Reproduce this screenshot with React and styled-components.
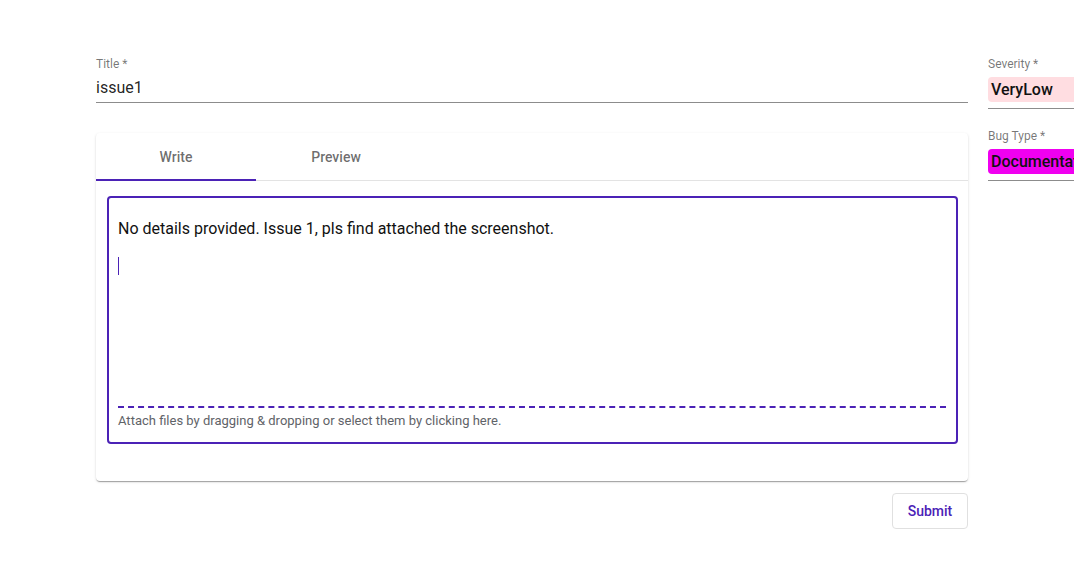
import React from "react";
import styled, { createGlobalStyle } from "styled-components";

const purple = "#4b22b6";

const GlobalStyle = createGlobalStyle`
  html, body {
    margin: 0;
    padding: 0;
    background: #fff;
    overflow: hidden;
  }
  body {
    font-family: Roboto, "Liberation Sans", sans-serif;
    color: rgba(0, 0, 0, 0.87);
  }
`;

const Page = styled.div`
  display: flex;
  gap: 20px;
  padding: 56px 0 0 96px;
  width: 1074px;
  box-sizing: border-box;
`;

const Main = styled.div`
  width: 872px;
  flex-shrink: 0;
`;

const Side = styled.div`
  width: 86px;
  flex-shrink: 0;
  overflow: hidden;
`;

const Label = styled.div`
  font-size: 12px;
  line-height: 16px;
  color: rgba(0, 0, 0, 0.54);
  white-space: nowrap;
`;

const InputRow = styled.div`
  font-size: 16px;
  line-height: 19px;
  padding: 5px 0 5px;
  border-bottom: 1px solid #8c8c8c;
  margin-top: 1px;
`;

const Card = styled.div`
  margin-top: 30px;
  background: #fff;
  border-radius: 4px;
  box-shadow: 0 2px 1px -1px rgba(0, 0, 0, 0.2), 0 1px 1px 0 rgba(0, 0, 0, 0.14),
    0 1px 3px 0 rgba(0, 0, 0, 0.12);
  padding-bottom: 37px;
`;

const TabBar = styled.div`
  display: flex;
  box-shadow: inset 0 -1px 0 #e3e3e3;
`;

const Tab = styled.div`
  width: 160px;
  height: 48px;
  display: flex;
  align-items: center;
  justify-content: center;
  font-size: 14px;
  font-weight: 500;
  color: rgba(0, 0, 0, 0.58);
  box-shadow: ${({ $active }) => ($active ? `inset 0 -2px 0 ${purple}` : "none")};
`;

const Editor = styled.div`
  margin: 15px 10px 0 11px;
  height: 248px;
  box-sizing: border-box;
  border: 2px solid ${purple};
  border-radius: 4px;
  padding: 0 10px 0 9px;
  display: flex;
  flex-direction: column;
`;

const TextArea = styled.div`
  height: 208px;
  box-sizing: border-box;
  padding-top: 19px;
  font-size: 16px;
  line-height: 24px;
  color: #111;
`;

const Caret = styled.div`
  width: 1px;
  height: 18px;
  margin-top: 16px;
  background: ${purple};
`;

const DropZone = styled.div`
  border-top: 2px dashed ${purple};
  padding: 5px 0 13px;
  font-size: 13px;
  line-height: 16px;
  color: #5f6368;
`;

const Actions = styled.div`
  display: flex;
  justify-content: flex-end;
  margin-top: 12px;
`;

const Button = styled.button`
  width: 76px;
  height: 36px;
  background: #fff;
  border: 1px solid #e0e0e0;
  border-radius: 4px;
  color: ${purple};
  font-family: Roboto, "Liberation Sans", sans-serif;
  font-size: 14px;
  font-weight: 500;
  cursor: pointer;
`;

const SelectField = styled.div`
  margin-top: ${({ $first }) => ($first ? "0" : "19px")};
`;

const SelectBox = styled.div`
  margin-top: 5px;
  padding-bottom: 6px;
  border-bottom: 1px solid #8c8c8c;
`;

const Chip = styled.div`
  height: 25px;
  width: 120px;
  border-radius: 4px;
  background: ${({ $bg }) => $bg};
  font-size: 16px;
  font-weight: 500;
  line-height: 25px;
  padding-left: 3px;
  color: #111;
  white-space: nowrap;
`;

export default function App() {
  return (
    <>
      <GlobalStyle />
      <Page>
        <Main>
          <Label>Title *</Label>
          <InputRow>issue1</InputRow>
          <Card>
            <TabBar>
              <Tab $active>Write</Tab>
              <Tab>Preview</Tab>
            </TabBar>
            <Editor>
              <TextArea>
                No details provided. Issue 1, pls find attached the screenshot.
                <Caret />
              </TextArea>
              <DropZone>
                Attach files by dragging &amp; dropping or select them by clicking here.
              </DropZone>
            </Editor>
          </Card>
          <Actions>
            <Button>Submit</Button>
          </Actions>
        </Main>
        <Side>
          <SelectField $first>
            <Label>Severity *</Label>
            <SelectBox>
              <Chip $bg="#ffdde1">VeryLow</Chip>
            </SelectBox>
          </SelectField>
          <SelectField>
            <Label>Bug Type *</Label>
            <SelectBox>
              <Chip $bg="#f000f0">Documentation</Chip>
            </SelectBox>
          </SelectField>
        </Side>
      </Page>
    </>
  );
}
